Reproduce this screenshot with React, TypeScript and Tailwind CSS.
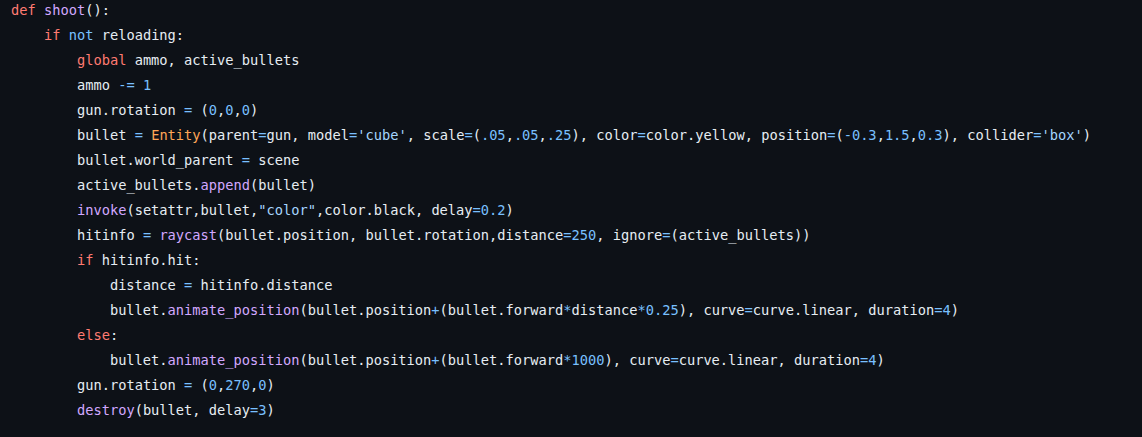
import React from "react";

const CODE = [
  "def shoot():",
  "    if not reloading:",
  "        global ammo, active_bullets",
  "        ammo -= 1",
  "        gun.rotation = (0,0,0)",
  "        bullet = Entity(parent=gun, model='cube', scale=(.05,.05,.25), color=color.yellow, position=(-0.3,1.5,0.3), collider='box')",
  "        bullet.world_parent = scene",
  "        active_bullets.append(bullet)",
  '        invoke(setattr,bullet,"color",color.black, delay=0.2)',
  "        hitinfo = raycast(bullet.position, bullet.rotation,distance=250, ignore=(active_bullets))",
  "        if hitinfo.hit:",
  "            distance = hitinfo.distance",
  "            bullet.animate_position(bullet.position+(bullet.forward*distance*0.25), curve=curve.linear, duration=4)",
  "        else:",
  "            bullet.animate_position(bullet.position+(bullet.forward*1000), curve=curve.linear, duration=4)",
  "        gun.rotation = (0,270,0)",
  "        destroy(bullet, delay=3)",
];

const KEYWORDS = new Set(["def", "if", "global", "else"]);

type Tok = { t: string; c: string };

function tokenize(line: string): Tok[] {
  const re = /(\s+)|('[^']*'|"[^"]*")|(\d*\.\d+|\d+)|([A-Za-z_]\w*)|(-=|[=+*\-])|(.)/g;
  const out: Tok[] = [];
  let m: RegExpExecArray | null;
  while ((m = re.exec(line)) !== null) {
    const s = m[0];
    let c = "text-[#e6edf3]";
    if (m[2]) c = "text-[#a5d6ff]";
    else if (m[3]) c = "text-[#79c0ff]";
    else if (m[4]) {
      const next = line[re.lastIndex];
      if (KEYWORDS.has(s)) c = "text-[#ff7b72]";
      else if (s === "not") c = "text-[#79c0ff]";
      else if (s === "Entity") c = "text-[#ffa657]";
      else if (next === "(") c = "text-[#d2a8ff]";
    } else if (m[5]) c = "text-[#79c0ff]";
    out.push({ t: s, c });
  }
  return out;
}

export default function App() {
  return (
    <div className="w-[1142px] h-[437px] bg-[#0d1117] overflow-hidden">
      <pre
        className="m-0 pl-[11px] -mt-[2px] text-[13.7px] leading-[25px] text-[#e6edf3]"
        style={{ fontFamily: '"DejaVu Sans Mono", "Liberation Mono", monospace' }}
      >
        {CODE.map((line, i) => (
          <div key={i} className="whitespace-pre">
            {tokenize(line).map((tk, j) => (
              <span key={j} className={tk.c}>
                {tk.t}
              </span>
            ))}
          </div>
        ))}
      </pre>
    </div>
  );
}
